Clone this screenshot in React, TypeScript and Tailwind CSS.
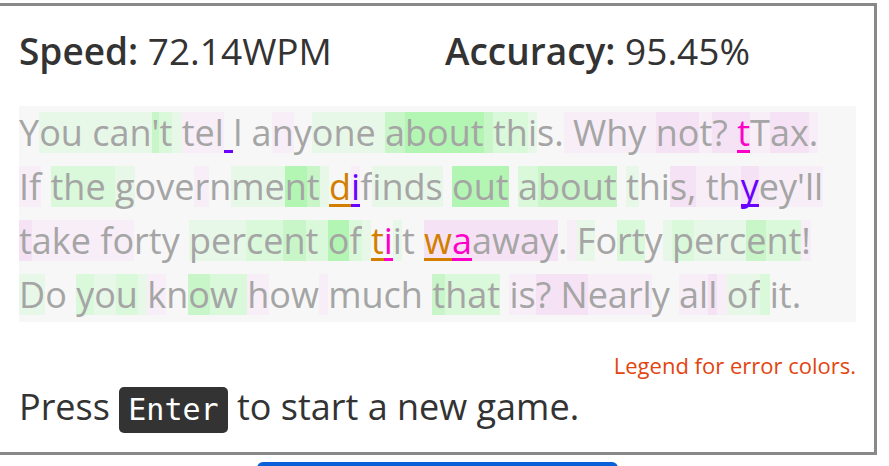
type Seg = { t: string; bg?: string; err?: "o" | "v" | "m" };

const BG: Record<string, string> = {
  a: "bg-[#e8f8e8]",
  b: "bg-[#daf8da]",
  c: "bg-[#c8f6c8]",
  d: "bg-[#b3f5b3]",
  p: "bg-[#f8eef8]",
  q: "bg-[#f5e3f5]",
};

const ERR: Record<string, string> = {
  o: "text-[#d27f00] border-[#d27f00]",
  v: "text-[#6a00ff] border-[#6a00ff]",
  m: "text-[#ff00c8] border-[#ff00c8]",
};

const lines: Seg[][] = [
  [
    { t: "Y" },
    { t: "ou can", bg: "a" },
    { t: "'", bg: "c" },
    { t: "t", bg: "b" },
    { t: " ", bg: "a" },
    { t: "tel", bg: "p" },
    { t: " ", err: "v" },
    { t: "l a" },
    { t: "n", bg: "p" },
    { t: "y" },
    { t: "one ", bg: "a" },
    { t: "a", bg: "c" },
    { t: "bout", bg: "d" },
    { t: " ", bg: "c" },
    { t: "th", bg: "b" },
    { t: "i", bg: "a" },
    { t: "s." },
    { t: " Why ", bg: "p" },
    { t: "no", bg: "q" },
    { t: "t", bg: "p" },
    { t: "? ", bg: "q" },
    { t: "t", bg: "q", err: "m" },
    { t: "T", bg: "p" },
    { t: "ax", bg: "q" },
    { t: ".", bg: "p" },
  ],
  [
    { t: "If", bg: "p" },
    { t: " " },
    { t: "the ", bg: "b" },
    { t: "g", bg: "a" },
    { t: "ove" },
    { t: "r", bg: "p" },
    { t: "n" },
    { t: "me", bg: "a" },
    { t: "n", bg: "d" },
    { t: "t", bg: "c" },
    { t: " ", bg: "a" },
    { t: "d", err: "o" },
    { t: "i", bg: "p", err: "v" },
    { t: "f" },
    { t: "inds", bg: "a" },
    { t: " " },
    { t: "out", bg: "d" },
    { t: " " },
    { t: "a", bg: "b" },
    { t: "bout", bg: "c" },
    { t: " " },
    { t: "t", bg: "a" },
    { t: "hi" },
    { t: "s,", bg: "q" },
    { t: " th", bg: "p" },
    { t: "y", bg: "q", err: "v" },
    { t: "ey'll", bg: "p" },
  ],
  [
    { t: "t", bg: "q" },
    { t: "ake fo", bg: "p" },
    { t: "rty " },
    { t: "per", bg: "a" },
    { t: "ce", bg: "b" },
    { t: "n", bg: "c" },
    { t: "t ", bg: "b" },
    { t: "o", bg: "d" },
    { t: "f", bg: "b" },
    { t: " ", bg: "a" },
    { t: "t", err: "o" },
    { t: "i", err: "m" },
    { t: "i", bg: "a" },
    { t: "t " },
    { t: "w", bg: "q", err: "o" },
    { t: "a", bg: "q", err: "m" },
    { t: "away", bg: "q" },
    { t: "." },
    { t: " ", bg: "p" },
    { t: "F", bg: "a" },
    { t: "o" },
    { t: "rt", bg: "b" },
    { t: "y" },
    { t: " ", bg: "a" },
    { t: "p", bg: "b" },
    { t: "erc", bg: "a" },
    { t: "e", bg: "c" },
    { t: "nt", bg: "b" },
    { t: "!", bg: "p" },
  ],
  [
    { t: "D", bg: "a" },
    { t: "o " },
    { t: "y", bg: "b" },
    { t: "o", bg: "a" },
    { t: "u", bg: "b" },
    { t: " ", bg: "a" },
    { t: "k", bg: "p" },
    { t: "n" },
    { t: "o", bg: "c" },
    { t: "w ", bg: "b" },
    { t: "h", bg: "p" },
    { t: "ow" },
    { t: " ", bg: "p" },
    { t: "much " },
    { t: "t", bg: "c" },
    { t: "hat", bg: "b" },
    { t: " " },
    { t: "is", bg: "p" },
    { t: "? N", bg: "q" },
    { t: "earl", bg: "p" },
    { t: "y " },
    { t: "al", bg: "p" },
    { t: "l", bg: "q" },
    { t: " ", bg: "p" },
    { t: "of", bg: "a" },
    { t: " ", bg: "b" },
    { t: "it." },
  ],
];

function Chunk({ seg }: { seg: Seg }) {
  const bg = seg.bg ? BG[seg.bg] : "";
  const err = seg.err ? `${ERR[seg.err]} border-b-[3px]` : "";
  return (
    <span className={`inline-block h-[41px] leading-[41px] whitespace-pre ${bg} ${err}`}>
      {seg.t}
    </span>
  );
}

export default function App() {
  return (
    <div className="min-h-screen bg-white pt-[3px] font-['Open_Sans',sans-serif] overflow-hidden">
      <div className="w-[877px] border-y-[3px] border-r-[3px] border-[#898989] pl-[19px] pr-[18px] pt-[18px] pb-[18px]">
        <div className="grid grid-cols-[426px_1fr] text-[37px] leading-[54px] text-[#333]">
          <div>
            <span className="font-semibold">Speed:</span> 72.14WPM
          </div>
          <div>
            <span className="font-semibold">Accuracy:</span> 95.45%
          </div>
        </div>

        <div className="mt-[28px] bg-[#f7f7f7] text-[36px] leading-[54px] text-[#a5a5a5]">
          {lines.map((line, i) => (
            <div key={i} className="h-[54px] whitespace-nowrap">
              {line.map((seg, j) => (
                <Chunk key={j} seg={seg} />
              ))}
            </div>
          ))}
        </div>

        <div className="mt-[28px] text-right text-[22px] leading-[30px] text-[#e2450f]">
          Legend for error colors.
        </div>

        <div className="text-[36px] leading-[54px] text-[#333]">
          Press{" "}
          <span className="inline-block h-[46px] rounded-[5px] bg-[#333] px-[9px] font-['DejaVu_Sans_Mono',monospace] text-[30px] leading-[46px] text-white">
            Enter
          </span>{" "}
          to start a new game.
        </div>
      </div>
      <div className="ml-[257px] mt-[7px] h-10 w-[361px] rounded-t-md bg-[#0a60d8]" />
    </div>
  );
}
